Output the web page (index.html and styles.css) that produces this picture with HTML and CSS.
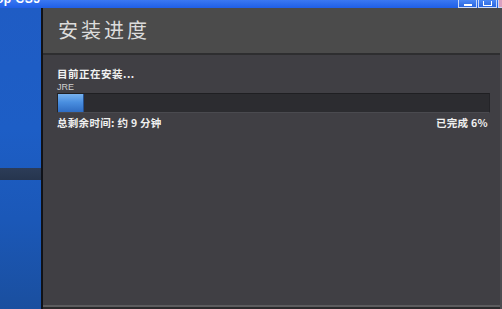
FILE: index.html
```html
<!DOCTYPE html>
<html lang="zh">
<head>
<meta charset="utf-8">
<link rel="stylesheet" href="styles.css">
</head>
<body>
<div class="window">
  <div class="titlebar">
    <span class="title-text">op CS5</span>
    <div class="win-btns">
      <span class="wbtn"><span class="min-glyph"></span></span>
      <span class="wbtn"><span class="max-glyph"></span></span>
      <span class="wbtn close"></span>
    </div>
  </div>
  <div class="main">
    <div class="sidebar">
      <div class="side-stripe"></div>
    </div>
    <div class="divider"></div>
    <div class="panel">
      <div class="header">
        <h1 class="heading">安装进度</h1>
      </div>
      <div class="content">
        <div class="status">目前正在安装...</div>
        <div class="item">JRE</div>
        <div class="bar"><div class="fill" style="width:6%"></div></div>
        <div class="info-row">
          <span class="info">总剩余时间: 约 9 分钟</span>
          <span class="info">已完成 6%</span>
        </div>
      </div>
      <div class="footer"></div>
    </div>
  </div>
</div>
</body>
</html>
```
FILE: styles.css
```css
* { box-sizing: border-box; }
html, body {
  margin: 0;
  padding: 0;
  width: 502px;
  height: 309px;
  overflow: hidden;
  background: #1b1b1d;
  font-family: "Noto Sans CJK SC", "Liberation Sans", sans-serif;
}
.window {
  display: flex;
  flex-direction: column;
  width: 502px;
  height: 309px;
}
.titlebar {
  height: 8px;
  flex: none;
  background: linear-gradient(#3a78f2, #1f5fe6);
  display: flex;
  justify-content: space-between;
  align-items: flex-start;
  overflow: hidden;
}
.title-text {
  color: #ffffff;
  font-family: "Liberation Sans", sans-serif;
  font-weight: bold;
  font-size: 12px;
  line-height: 12px;
  margin-top: -7px;
  margin-left: -4px;
  letter-spacing: 0.5px;
}
.win-btns {
  display: flex;
  gap: 1px;
}
.wbtn {
  width: 19px;
  height: 8px;
  border: 1px solid #c8d8f8;
  border-top: none;
  background: linear-gradient(#4c88f4, #2a66e0);
  display: flex;
  justify-content: center;
  align-items: flex-end;
  padding-bottom: 1px;
}
.min-glyph {
  width: 8px;
  height: 2px;
  background: #fff;
}
.max-glyph {
  width: 9px;
  height: 5px;
  border: 1px solid #fff;
  border-top: none;
}
.wbtn.close {
  width: 4px;
  background: #d9a0c0;
  border-right: none;
}
.main {
  flex: 1;
  display: flex;
  min-height: 0;
}
.sidebar {
  width: 41px;
  flex: none;
  background: linear-gradient(#1f5cc4 0%, #1d5ec6 40%, #1b58b8 70%, #1a4f9f 100%);
  display: flex;
  flex-direction: column;
  padding-top: 160px;
}
.side-stripe {
  height: 12px;
  background: linear-gradient(#2c3c58, #26354e);
}
.divider {
  width: 2px;
  flex: none;
  background: #101218;
}
.panel {
  flex: 1;
  display: flex;
  flex-direction: column;
  background: #403f44;
  border-right: 2px solid #4c4b50;
}
.header {
  height: 47px;
  flex: none;
  background: #4b4b4b;
  border-bottom: 2px solid #2e2e30;
  padding-left: 15px;
  display: flex;
  align-items: center;
}
.heading {
  margin: 0;
  font-weight: normal;
  font-size: 20px;
  line-height: 24px;
  letter-spacing: 3px;
  color: #dcdcdc;
  margin-top: -1px;
}
.content {
  flex: 1;
  padding: 12px 10px 0 14px;
  display: flex;
  flex-direction: column;
}
.status {
  color: #f2f2f2;
  font-weight: bold;
  font-size: 10.5px;
  line-height: 14px;
  letter-spacing: 0.5px;
}
.item {
  color: #cfcfcf;
  font-family: "Liberation Sans", sans-serif;
  font-size: 9px;
  line-height: 10px;
  margin-top: 1px;
}
.bar {
  height: 20px;
  margin-top: 1px;
  background: #2c2c30;
  border: 1px solid #242428;
  border-top-color: #1f1f22;
  border-bottom-color: #4a4a4f;
}
.fill {
  height: 100%;
  background: linear-gradient(#78b2ee 0%, #4a8fe0 45%, #2f6cc2 100%);
  border-right: 1px solid #25508f;
}
.info-row {
  display: flex;
  justify-content: space-between;
  margin-top: 3px;
  padding-right: 2px;
}
.info {
  color: #f0f0f0;
  font-weight: bold;
  font-size: 10.5px;
  line-height: 14px;
  letter-spacing: 0.3px;
}
.footer {
  height: 4px;
  flex: none;
  border-top: 2px solid #5c5c5e;
  background: #2a2a2c;
}
```
